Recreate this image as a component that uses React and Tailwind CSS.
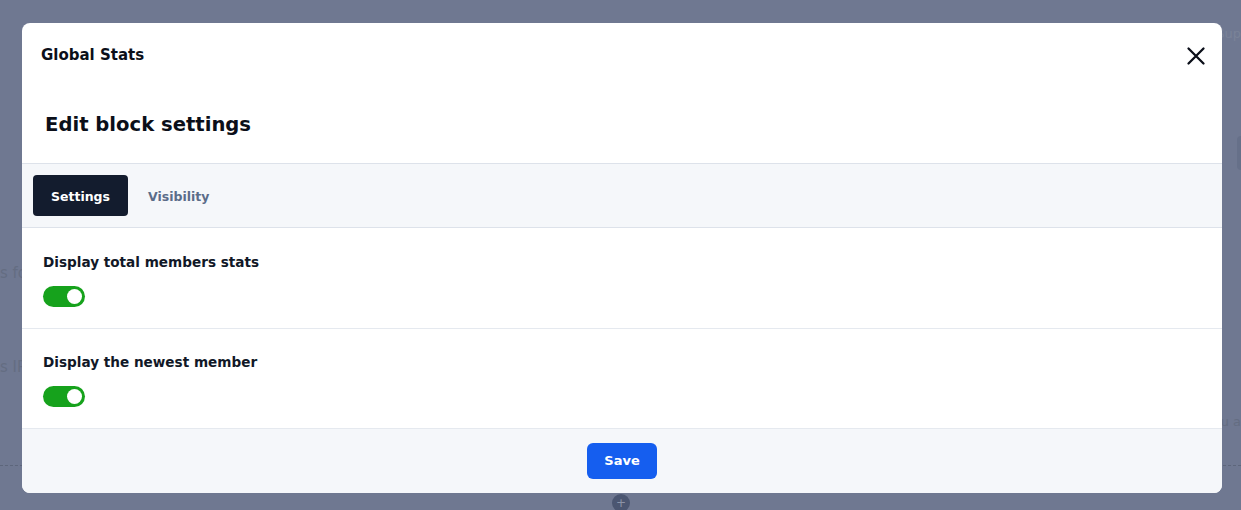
import React from 'react'

const font = { fontFamily: '"DejaVu Sans", Verdana, sans-serif' }

const Toggle = () => (
    <div className='w-[42px] h-[21px] rounded-full bg-[#16a21c] flex items-center justify-end pr-[3px]'>
        <div className='w-[15px] h-[15px] rounded-full bg-white' />
    </div>
)

const Row = ({ label, last }) => (
    <div className={last ? 'px-[21px] pt-[25px] h-[99px]' : 'px-[21px] pt-[26px] h-[101px] border-b border-[#e5e9ef]'}>
        <div className='text-[13.6px] font-bold text-[#111827] leading-[16px]'>{label}</div>
        <div className='mt-[16px]'>
            <Toggle />
        </div>
    </div>
)

const App = () => {
    return (
        <div style={font} className='relative w-full h-[510px] bg-[#6f7891] overflow-hidden'>
            {/* faded page behind the overlay */}
            <div className='absolute left-0 top-[262px] text-[15px] text-[#646d82]'>s fo</div>
            <div className='absolute left-0 top-[356px] text-[15px] text-[#646d82]'>s IP</div>
            <div className='absolute right-0 top-[24px] text-[13px] text-[#7a8398]'>Sup</div>
            <div className='absolute right-0 top-[412px] text-[13px] text-[#646d82]'>ou a</div>
            <div className='absolute right-0 top-[136px] w-[4px] h-[34px] rounded-l bg-[#667089]' />
            <div className='absolute left-0 right-0 top-[465px] border-t border-dashed border-[#5d667b]' />
            <div className='absolute left-[612px] top-[494px] w-[18px] h-[18px] rounded-full bg-[#4b5671] flex items-center justify-center text-[#8c94a8] text-[12px] leading-none'>+</div>

            <div className='relative pt-[23px] px-[22px]'>
                <div className='w-[1200px] h-[470px] bg-white rounded-[8px] overflow-hidden flex flex-col'>
                    <div className='flex items-start justify-between pl-[19px] pr-[16px] pt-[22px] h-[70px]'>
                        <div className='text-[15px] font-bold text-[#0b0f19] leading-[20px]'>Global Stats</div>
                        <button className='w-[20px] h-[20px] flex items-center justify-center mt-[1px]'>
                            <svg width='20' height='20' viewBox='0 0 20 20' fill='none' stroke='#0b0f19' strokeWidth='2.3' strokeLinecap='round'>
                                <path d='M2.5 2.5L17.5 17.5M17.5 2.5L2.5 17.5' />
                            </svg>
                        </button>
                    </div>
                    <div className='px-[23px] h-[71px] border-b border-[#dde2ea]'>
                        <div className='text-[19.6px] font-bold text-[#0b0f19] leading-[24px] pt-[20px]'>Edit block settings</div>
                    </div>
                    <div className='h-[64px] bg-[#f5f7fa] border-b border-[#dde2ea] flex items-center gap-[20px] px-[11px]'>
                        <div className='w-[95px] h-[41px] pt-[3px] rounded-[4px] bg-[#131c2e] text-white text-[12.5px] font-bold flex items-center justify-center'>Settings</div>
                        <div className='text-[12.5px] font-bold text-[#5b6c89] pt-[3px]'>Visibility</div>
                    </div>
                    <Row label='Display total members stats' />
                    <Row label='Display the newest member' last />
                    <div className='flex-1 bg-[#f5f7fa] border-t border-[#e5e9ef] flex items-center justify-center'>
                        <button className='w-[70px] h-[36px] rounded-[6px] bg-[#155eef] text-white text-[13px] font-bold'>Save</button>
                    </div>
                </div>
            </div>
        </div>
    )
}

export default App
